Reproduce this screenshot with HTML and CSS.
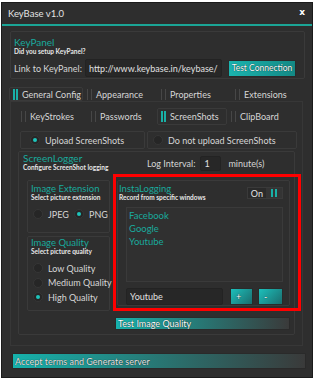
FILE: index.html
```html
<!DOCTYPE html>
<html lang="en">

<head>
    <meta charset="UTF-8">
    <meta name="viewport" content="width=device-width, initial-scale=1.0">
    <title>KeyBase v1.0</title>
    <link rel="stylesheet" href="styles.css">
</head>

<body>
    <div class="window">
        <!-- Title bar -->
        <div class="titlebar">
            <span class="app-title">KeyBase v1.0</span>
            <span class="close">x</span>
        </div>

        <div class="main">
            <!-- KeyPanel -->
            <div class="group keypanel">
                <div class="group-title big">KeyPanel</div>
                <div class="group-sub">Did you setup KeyPanel?</div>
                <div class="link-row">
                    <span class="link-label">Link to KeyPanel:</span>
                    <input class="field link-field" type="text" value="http://www.keybase.in/keybase/">
                    <button class="btn btn-test">Test Connection</button>
                </div>
            </div>

            <!-- Main tabs -->
            <div class="tabs tabs-main">
                <div class="tab active"><span class="bars"></span>General Config</div>
                <div class="tab"><span class="bars"></span>Appearance</div>
                <div class="tab"><span class="bars"></span>Properties</div>
                <div class="tab"><span class="bars"></span>Extensions</div>
            </div>

            <div class="tabpage">
                <!-- Sub tabs -->
                <div class="tabs tabs-sub">
                    <div class="tab"><span class="bars"></span>KeyStrokes</div>
                    <div class="tab"><span class="bars"></span>Passwords</div>
                    <div class="tab active"><span class="bars"></span>ScreenShots</div>
                    <div class="tab"><span class="bars"></span>ClipBoard</div>
                </div>

                <div class="subpage">
                    <div class="upload-row">
                        <div class="group upload-box">
                            <span class="radio checked"></span>Upload ScreenShots
                        </div>
                        <div class="group upload-box wide">
                            <span class="radio"></span>Do not upload ScreenShots
                        </div>
                    </div>

                    <!-- ScreenLogger -->
                    <div class="group logger">
                        <div class="logger-head">
                            <div class="logger-title">
                                <div class="group-title big">ScreenLogger</div>
                                <div class="group-sub">Configure ScreenShot logging</div>
                            </div>
                            <div class="interval">
                                <span>Log Interval:</span>
                                <input class="field interval-field" type="text" value="1">
                                <span class="unit">minute(s)</span>
                            </div>
                        </div>

                        <div class="logger-cols">
                            <div class="col-left">
                                <div class="group ext-box">
                                    <div class="group-title">Image Extension</div>
                                    <div class="group-sub">Select picture extension</div>
                                    <div class="ext-row">
                                        <label class="opt"><span class="radio"></span>JPEG</label>
                                        <label class="opt"><span class="radio checked"></span>PNG</label>
                                    </div>
                                </div>
                                <div class="group quality-box">
                                    <div class="group-title">Image Quality</div>
                                    <div class="group-sub">Select picture quality</div>
                                    <div class="quality-list">
                                        <label class="opt"><span class="radio"></span>Low Quality</label>
                                        <label class="opt"><span class="radio"></span>Medium Quality</label>
                                        <label class="opt"><span class="radio checked"></span>High Quality</label>
                                    </div>
                                </div>
                            </div>

                            <div class="col-right">
                                <div class="group insta-box">
                                    <div class="insta-head">
                                        <div>
                                            <div class="group-title">InstaLogging</div>
                                            <div class="group-sub">Record from specific windows</div>
                                        </div>
                                        <div class="toggle">
                                            <span class="toggle-label">On</span>
                                            <span class="toggle-knob"><span class="bars"></span></span>
                                        </div>
                                    </div>
                                    <div class="listbox">
                                        <div class="list-item">Facebook</div>
                                        <div class="list-item">Google</div>
                                        <div class="list-item">Youtube</div>
                                    </div>
                                    <div class="add-row">
                                        <input class="field add-field" type="text" value="Youtube">
                                        <button class="btn btn-small btn-plus">+</button>
                                        <button class="btn btn-small btn-minus">-</button>
                                    </div>
                                </div>
                                <button class="btn btn-fade btn-quality">Test Image Quality</button>
                            </div>
                        </div>
                    </div>
                </div>
            </div>

            <button class="btn btn-fade btn-accept">Accept terms and Generate server</button>
        </div>
    </div>
</body>
</html>
```

FILE: styles.css
```css
* {
    box-sizing: border-box;
}

body {
    margin: 0;
    background-color: #ffffff;
    font-family: Lato, "Liberation Sans", sans-serif;
    font-size: 9px;
    color: #d6d6d6;
    white-space: nowrap;
}

.window {
    width: 312px;
    height: 376px;
    margin: 2px 0 0 1px;
    background-color: #2e2e2e;
    border: 1px solid #1b1b1b;
}

/* Title bar */
.titlebar {
    height: 23px;
    display: flex;
    align-items: center;
    justify-content: space-between;
    padding: 0 7px 0 6px;
    border-bottom: 2px solid #1ba596;
}

.app-title {
    font-size: 9.5px;
    color: #e2e2e2;
}

.close {
    font-family: "DejaVu Sans", sans-serif;
    font-weight: bold;
    font-size: 9px;
    color: #ffffff;
    margin-top: -3px;
}

.main {
    padding: 5px 7px 0 8px;
}

/* Generic group box */
.group {
    border: 1px solid #3a3a3a;
    border-radius: 2px;
}

.group-title {
    font-size: 9.5px;
    line-height: 11px;
    color: #19a99c;
}

.group-title.big {
    font-size: 10px;
}

.group-sub {
    font-size: 6.5px;
    line-height: 7px;
    font-weight: bold;
    color: #e6e6e6;
}

.field {
    font-family: inherit;
    font-size: 9px;
    color: #e0e0e0;
    background-color: #272727;
    border: 1px solid #232323;
    border-radius: 2px;
    padding: 0 3px;
    outline: none;
}

.btn {
    font-family: inherit;
    font-size: 9px;
    color: #ffffff;
    border: 1px solid #2a2a2a;
    border-radius: 1px;
    padding: 0 2px;
    cursor: pointer;
    white-space: nowrap;
    text-shadow: 0 0 1px #000;
}

/* KeyPanel */
.keypanel {
    height: 48px;
    padding: 5px 3px 1px 3px;
}

.link-row {
    display: flex;
    align-items: center;
    height: 18px;
    margin-top: 4px;
}

.link-label {
    width: 71px;
}

.link-field {
    width: 137px;
    height: 18px;
}

.btn-test {
    width: 68px;
    height: 17px;
    margin-left: 6px;
    padding: 0;
    font-size: 8.5px;
    text-align: center;
    background: linear-gradient(to right, #1bb3ae, #138985);
}

/* Tabs */
.tabs {
    display: flex;
}

.tab {
    display: flex;
    align-items: center;
    padding-left: 3px;
    border: 1px solid transparent;
}

.tab .bars,
.toggle-knob .bars {
    display: inline-block;
    width: 5px;
    height: 11px;
    border-left: 1px solid #474747;
    border-right: 1px solid #474747;
    margin-right: 4px;
}

.tab.active {
    border-color: #3a3a3a;
    border-radius: 2px;
}

.tab.active .bars {
    border-left: 2px solid #19b0a6;
    border-right: 2px solid #19b0a6;
}

.tabs-main {
    margin-top: 8px;
    margin-left: -1px;
    height: 14px;
}

.tabs-main .tab {
    width: 75px;
}

.tabpage {
    width: 293px;
    height: 245px;
    border: 1px solid #373737;
    padding: 6px 5px 0 6px;
}

.tabs-sub {
    height: 17px;
}

.tabs-sub .tab {
    width: 70px;
}

.subpage {
    padding-left: 1px;
}

/* Upload choice */
.upload-row {
    display: flex;
    gap: 2px;
    margin-top: 6px;
    height: 18px;
}

.upload-box {
    display: flex;
    align-items: center;
    width: 125px;
    margin-left: 2px;
    padding-left: 9px;
}

.upload-box.wide {
    width: auto;
    flex: 1;
    margin-left: 0;
    padding-left: 5px;
}

.radio {
    display: inline-block;
    width: 10px;
    height: 10px;
    border-radius: 50%;
    background-color: #262626;
    border: 1px solid #363636;
    margin-right: 5px;
    position: relative;
    flex-shrink: 0;
}

.radio.checked::after {
    content: "";
    position: absolute;
    left: 2px;
    top: 2px;
    width: 4px;
    height: 4px;
    border-radius: 50%;
    background-color: #1ec4bb;
}

/* ScreenLogger */
.logger {
    margin-top: 2px;
    margin-right: 2px;
    height: 184px;
    padding: 1px 0 0 4px;
}

.logger-head {
    display: flex;
}

.logger-title {
    width: 124px;
}

.interval {
    display: flex;
    align-items: center;
    height: 15px;
    margin-top: 3px;
}

.interval-field {
    width: 21px;
    height: 15px;
    margin-left: 5px;
}

.unit {
    margin-left: 7px;
}

.logger-cols {
    display: grid;
    grid-template-columns: 83px 173px;
    column-gap: 7px;
    margin-top: 9px;
    margin-left: 4px;
}

.col-left {
    display: flex;
    flex-direction: column;
    gap: 3px;
}

.ext-box {
    height: 53px;
    padding: 2px 0 0 3px;
}

.ext-row {
    display: flex;
    align-items: center;
    height: 16px;
    margin-top: 5px;
}

.opt {
    display: flex;
    align-items: center;
}

.ext-row .opt:first-child {
    margin-left: 2px;
    width: 41px;
}

.quality-box {
    height: 75px;
    padding: 0 0 0 3px;
}

.quality-list {
    margin-top: 6px;
    margin-left: 2px;
}

.quality-list .opt {
    height: 14.5px;
}

/* InstaLogging */
.col-right {
    display: flex;
    flex-direction: column;
}

.insta-box {
    position: relative;
    height: 126px;
    padding: 2px 6px 0 1px;
}

.insta-box::after {
    content: "";
    position: absolute;
    top: -7px;
    left: -5px;
    right: -12px;
    bottom: -6px;
    border: 3px solid #ff0000;
}

.insta-head {
    display: flex;
    justify-content: space-between;
}

.toggle {
    display: flex;
    align-items: center;
    height: 12px;
    margin-top: 4px;
    border: 1px solid #3a3a3a;
    background-color: #2a2a2a;
}

.toggle-label {
    padding: 0 3px;
    color: #e4e4e4;
}

.toggle-knob {
    display: flex;
    align-items: center;
    height: 100%;
    padding: 0 5px;
    background-color: #343434;
}

.toggle-knob .bars {
    width: 6px;
    height: 8px;
    margin-right: 0;
    border-left: 2px solid #19b0a6;
    border-right: 2px solid #19b0a6;
}

.listbox {
    height: 75px;
    margin: 6px 0 0 7px;
    padding-top: 1px;
    padding-left: 2px;
    background-color: #303030;
    border: 1px solid #3a3a3a;
}

.list-item {
    line-height: 13px;
    font-size: 9.5px;
    color: #19a99c;
}

.add-row {
    display: flex;
    height: 17px;
    margin: 6px 0 0 7px;
}

.add-field {
    width: 97px;
    height: 17px;
}

.btn-small {
    height: 17px;
    text-align: left;
    padding-left: 5px;
    background: linear-gradient(135deg, #1cc0bb, #1b6c6d);
}

.btn-plus {
    width: 23px;
    margin-left: 7px;
}

.btn-minus {
    width: 25px;
    margin-left: 5px;
}

.btn-fade {
    display: block;
    text-align: left;
    background: linear-gradient(to right, #16b2ac, #3a3a3a);
}

.btn-quality {
    width: 175px;
    height: 13px;
    margin: 11px 0 0 -2px;
    line-height: 11px;
}

.btn-accept {
    width: 294px;
    height: 16px;
    margin: 7px 0 0 2px;
    color: #e8e8e8;
}
```
